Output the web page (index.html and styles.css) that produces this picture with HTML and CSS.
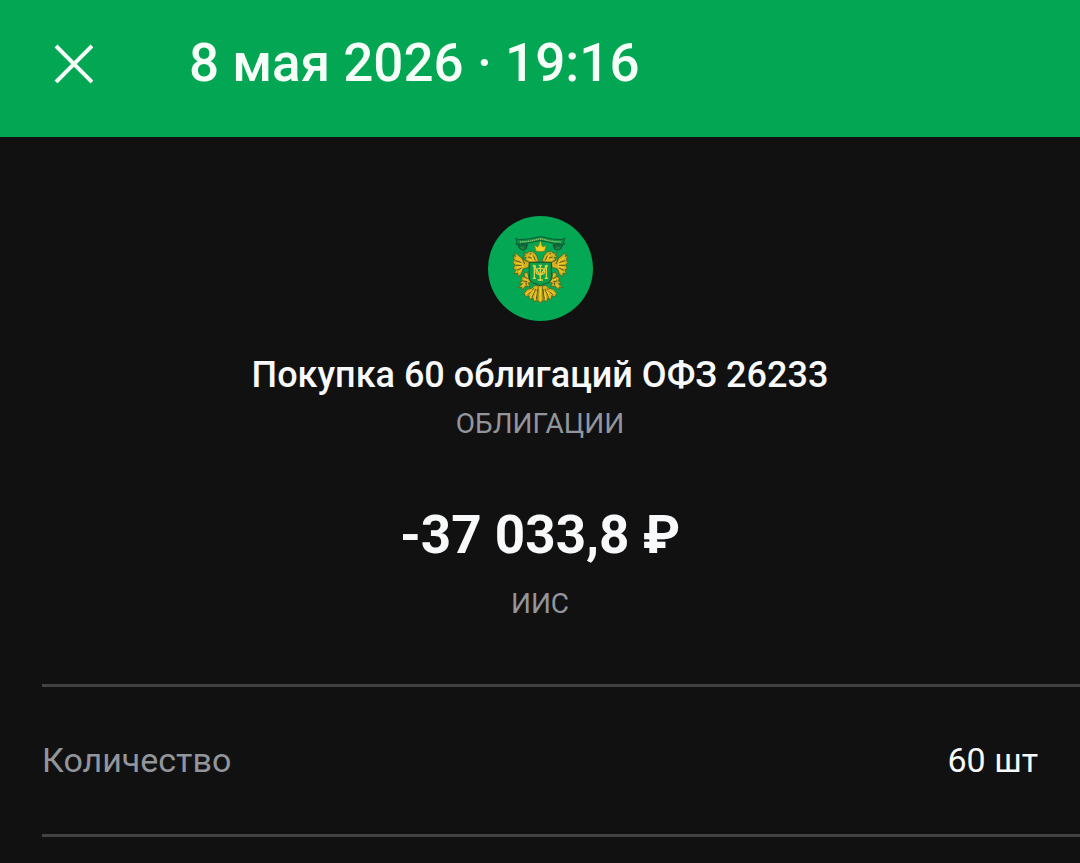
FILE: index.html
```html
<!DOCTYPE html>
<html lang="ru">
<head>
    <meta charset="UTF-8">
    <meta name="viewport" content="width=device-width, initial-scale=1">
    <title>Покупка 60 облигаций ОФЗ 26233</title>
    <link rel="stylesheet" href="styles.css">
</head>
<body>
<header class="header">
    <button class="close" type="button" aria-label="Закрыть">
        <svg viewBox="0 0 40 40"><path d="M3 3L39 39M39 3L3 39"/></svg>
    </button>
    <h1>8 мая 2026 · 19:16</h1>
</header>
<main>
    <section class="operation">
        <svg class="logo" viewBox="24 24 315 315" aria-hidden="true">
            <circle class="logo-bg" cx="181.5" cy="181.5" r="157.5"/>
            <defs>
                <g id="half">
                    <!-- wing feathers, from the outer one in -->
                    <path class="gold" d="M112 139L104 134L106 146L99 142L103 156L98 164L105 170L100 182L107 185L103 198L113 195L114 206L124 198L129 183L146 178L148 163L136 158L125 150Z"/>
                    <path class="dark" d="M106 158L123 163M106 172L125 172M110 187L125 180M127 152L134 168"/>
                    <path class="shade" d="M108 148L126 160M108 165L128 169M110 179L130 175M116 194L126 183"/>
                    <!-- head -->
                    <path class="gold" d="M176 160L170 143L161 132L149 130L141 136L129 135L137 141L128 147L139 148L135 155L148 163L163 163Z"/>
                    <path class="dark" d="M149 137h5M144 147l11 3M160 143l6 14"/>
                    <path class="shade" d="M154 142l8 16M145 154l11 4"/>
                    <!-- small crown by the scroll -->
                    <path class="leaf" d="M113 108L121 113L127 107L134 112L142 109L139 122L130 127L119 122Z"/>
                    <path class="shade-green" d="M119 116l7 3l7-3M123 122h11"/>
                    <!-- leg -->
                    <path class="gold" d="M143 193L132 196L134 206L123 208L127 219L118 224L127 228L112 240L124 237L127 245L137 234L150 236L145 225L154 222L146 213Z"/>
                    <path class="dark" d="M134 207l9 5M130 219l12 2M139 231l-1-8"/>
                    <path class="shade" d="M138 199l4 6M134 214l10 3M126 235l9-7"/>
                    <!-- tail -->
                    <path class="gold" d="M178 235L165 232L155 241L142 244L132 256L137 266L147 263L149 275L159 270L163 281L171 276L178 282Z"/>
                    <path class="dark" d="M144 260L161 241M156 269L167 243M169 274L173 243"/>
                    <path class="shade" d="M138 257L157 246M151 268L162 249M164 276L169 252"/>
                </g>
            </defs>
            <use href="#half"/>
            <use href="#half" transform="translate(362 0) scale(-1 1)"/>
            <path class="gold" d="M175 232L181 226L187 232L189 277L181 285L173 277Z"/>
            <path class="shade" d="M181 238V276"/>
            <path class="scroll" d="M107 90L116 95Q148 94 164 89Q181 82 198 89Q214 94 246 95L255 90L251 102L254 109L244 108Q214 106 198 101Q181 95 164 101Q148 106 118 108L108 109L111 102Z"/>
            <path class="scroll-text" d="M120 102Q148 101 164 96Q181 90 198 96Q214 101 242 102"/>
            <path class="crown" d="M168 129L163 111L173 117L178 109L177 104H179V100H183V104H185L184 109L189 117L199 111L194 129Q181 133 168 129Z"/>
            <path class="shield" d="M148 163H214V207Q214 223 197 227Q187 229 181 234Q175 229 165 227Q148 223 148 207Z"/>
            <g class="monogram">
                <path d="M181 172V219M173 216H189M176 172H186"/>
                <path d="M163 210V175L181 203L199 175V210"/>
                <path d="M158 174H168M194 174H204M158 211H168M194 211H204"/>
                <path d="M181 181Q169 180 168 190Q168 200 181 199Q194 200 194 190Q193 180 181 181Z"/>
            </g>
        </svg>
        <h2>Покупка 60 облигаций ОФЗ 26233</h2>
        <p class="caption">ОБЛИГАЦИИ</p>
        <p class="amount">-37 033,8 ₽</p>
        <p class="caption">ИИС</p>
    </section>
    <dl class="details">
        <div class="row">
            <dt>Количество</dt>
            <dd>60 шт</dd>
        </div>
    </dl>
</main>
</body>
</html>
```

FILE: styles.css
```css
*{
    margin: 0;
    padding: 0;
    box-sizing: border-box;
}
body{
    background: #111111;
    color: #f8f9fa;
    font-family: Roboto, "Liberation Sans", sans-serif;
}
.header{
    display: flex;
    align-items: flex-start;
    gap: 96px;
    padding: 31px 53px 42px;
    background: #02a653;
    color: #f5fff8;
}
.close{
    width: 40px;
    height: 64px;
    border: 0;
    background: none;
    cursor: pointer;
}
.close svg{
    display: block;
    width: 40px;
    height: 40px;
    margin: auto;
    fill: none;
    stroke: #f5fff8;
    stroke-width: 4;
}
h1{
    font-size: 53px;
    line-height: 64px;
    font-weight: 500;
}
.operation{
    padding: 79px 42px 62px;
    text-align: center;
}
.logo{
    display: block;
    width: 105px;
    height: 105px;
    margin: 0 auto 32px;
}
.logo-bg{
    fill: #04a754;
}
.gold{
    fill: #d6b023;
    stroke: #4a5a1c;
    stroke-width: 2;
}
.crown{
    fill: #f2d022;
    stroke: #6a7a1c;
    stroke-width: 2;
}
.dark{
    fill: none;
    stroke: #5d5a17;
    stroke-width: 3;
}
.shade{
    fill: none;
    stroke: #f6d42c;
    stroke-width: 3;
}
.shade-green{
    fill: none;
    stroke: #2f9a55;
    stroke-width: 2;
}
.leaf{
    fill: #17693a;
    stroke: #0d5531;
    stroke-width: 3;
}
.scroll{
    fill: #079448;
    stroke: #0c5c34;
    stroke-width: 3;
}
.scroll-text{
    fill: none;
    stroke: #9cc46a;
    stroke-width: 4;
    stroke-dasharray: 4 2;
}
.shield{
    fill: #06a04f;
    stroke: #274f20;
    stroke-width: 3;
}
.monogram{
    fill: none;
    stroke: #dfcf45;
    stroke-width: 4;
}
h2{
    font-size: 36px;
    line-height: 44px;
    font-weight: 500;
}
.caption{
    margin-top: 9px;
    color: #92959c;
    font-size: 28px;
    line-height: 36px;
}
.amount{
    margin-top: 61px;
    font-size: 53px;
    line-height: 64px;
    font-weight: 700;
}
.amount + .caption{
    margin-top: 19px;
}
.details{
    margin-left: 42px;
    border-top: 3px solid #424242;
}
.row{
    display: flex;
    justify-content: space-between;
    gap: 24px;
    padding: 53px 42px 54px 0;
    border-bottom: 3px solid #424242;
    font-size: 34px;
    line-height: 40px;
}
.row dt{
    color: #92959c;
}
```
